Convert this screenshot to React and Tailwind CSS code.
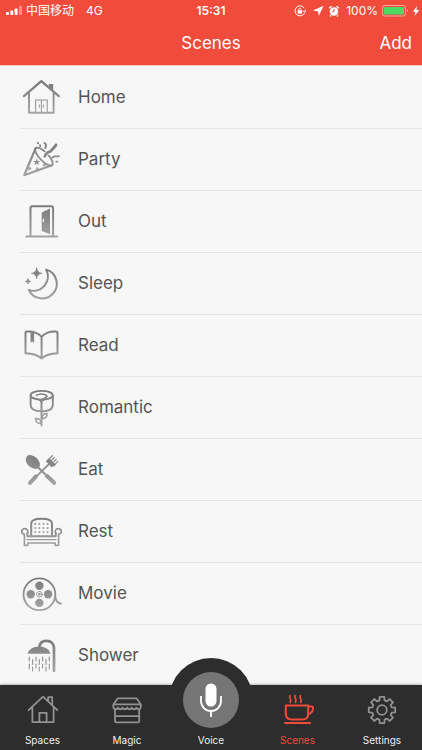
import { useState } from "react";

const HomeIcon = () => (
  <>
    <path d="M4 19.2 21.3 4.2 38.8 19.2" strokeWidth="2.4" />
    <path d="M9 16v19.7h24.6V16" strokeWidth="1.9" />
    <path d="M28.8 7h4.4v7l-4.4-3.800z" fill="url(#ink)" stroke="none" />
    <path d="M15.6 35V23h11.6v12M21.4 23v12" strokeWidth="1.1" />
    <path d="M19.4 28v2.4M23.4 28v2.4" strokeWidth="1" />
  </>
);

const PartyIcon = () => (
  <>
    <path d="M15.6 9.400 4.200 36.200 32 26.200" strokeWidth="2.200" />
    <path d="M15.600 9.200c2-1.800 7 .8 11.400 5.400 4.600 4.800 7 10 5.200 11.600-2 1.600-7-1.200-11.200-5.600-4.400-4.600-7.200-9.800-5.400-11.400z" strokeWidth="1.8" />
    <path d="M23.400 18.400C26 11.600 29.600 14.600 31.600 11.400S35 8.600 36 5.400" stroke="#f7f7f7" strokeWidth="4.400" />
    <path d="M24.800 17.400C26.600 11.800 29.600 14.200 31.600 11.200S35 8.600 36 5.800" strokeWidth="2.700" />
    <path d="M24.400 4.200c2.400 1 1.800 2.800.8 4.800" strokeWidth="1.8" />
    <path d="M17.600 3.800l.6.500M20 6l.3 1.200" strokeWidth="1.700" />
    <path d="M32.400 18.600c2-2.400 4-.2 6.600-1.600M36.200 22.600h1.200" strokeWidth="1.700" />
    <path
      d="M16.700 19.400l1 2.500 2.700.1-2.100 1.700.7 2.600-2.300-1.500-2.300 1.500.7-2.600-2.100-1.700 2.700-.1z"
      fill="url(#ink)"
      stroke="none"
    />
    <path d="M8.400 28l3 1.200-2.400 2zM17 28.400l2 1.800-2.800.6zM24 24.200l2.400 1.800-2.800 1z" fill="url(#ink)" strokeWidth=".5" />
  </>
);

const OutIcon = () => (
  <>
    <path d="M10.500 35V7.200c0-1.200.8-2 2-2h18.600c1.200 0 2 .8 2 2V35" strokeWidth="2" />
    <path d="M6.400 35.400h30.800" strokeWidth="2" />
    <path d="M21.700 11.400 30 7.600v25.600l-8.300-3.200z" fill="url(#ink)" stroke="none" />
    <path d="M23.400 18v2.600" stroke="#f7f7f7" strokeWidth="1.2" />
  </>
);

const SleepIcon = () => (
  <>
    <path d="M26.200 6.600A14.700 14.700 0 1 1 8.800 27 14.400 14.400 0 0 0 26.200 6.600z" strokeWidth="2" />
    <path
      d="M16.700 4.800q.5 5 5.500 5.500-5 .5-5.500 5.500-.5-5-5.500-5.500 5-.5 5.500-5.500zM8 15.600q.3 2.500 2.700 2.800-2.400.3-2.700 2.800-.3-2.500-2.700-2.800 2.400-.3 2.700-2.800z"
      fill="url(#ink)"
      strokeWidth=".5"
    />
  </>
);

const ReadIcon = () => (
  <>
    <path
      d="M21.600 12C19 8 12.400 6.200 7 6.600c-1 0-1.500.6-1.500 1.400v20.200c5.500.2 12 1.400 16.100 5.200 4.100-3.800 10.400-5 15.900-5.200V8c0-.8-.5-1.400-1.500-1.400-5.400-.4-11.800 1.400-14.400 5.400zv21.200"
      strokeWidth="2"
    />
    <path d="M10.500 7.400h3.600v10.400l-1.800-1.200-1.800 1.200z" fill="url(#ink)" stroke="none" />
  </>
);

const RoseIcon = () => (
  <>
    <path d="M10.600 8.600v9.200c0 4 3.600 6.600 11 6.600s11.200-2.600 11.200-6.600V8.600" strokeWidth="1.900" />
    <ellipse cx="21.7" cy="8.2" rx="11.1" ry="4.4" strokeWidth="1.800" />
    <path d="M11 10.500c3.200 1.600 8.200.4 10.500 4.500 1-3.400 7.500-2.600 11-5M16.500 8.400c2.500-2.200 9-1.600 10.500.6 0 2-3.500 2.600-5.500 3.400" strokeWidth="1.5" />
    <path d="M21.5 14.500v24" strokeWidth="2" />
    <path d="M22 31.600c0-3.600 1.600-5.200 5-5.200.2 3.600-1.600 5.200-5 5.200zM21 36.600c-3.400 0-5.400-1.600-5.400-5 3.800-.2 5.400 1.600 5.400 5z" strokeWidth="1.5" />
  </>
);

const EatIcon = () => (
  <>
    <ellipse cx="12.8" cy="13" rx="8.2" ry="5.6" transform="rotate(43 12.8 13)" fill="url(#ink)" stroke="none" />
    <path d="M16 16.500 26 26" strokeWidth="2" />
    <path d="M27 27l7.200 6.800" strokeWidth="4" />
    <path d="M17 26.800 28.400 15.600" strokeWidth="1.8" />
    <path d="M16 27.400l-6 6.400" strokeWidth="4" />
    <path d="M26 12.600 31.200 18c2 .2 3.400-.8 4.600-2.200l-6.600-6.600c-1.600 1-2.800 1.800-3.200 3.400z" fill="url(#ink)" stroke="none" />
    <path d="M28.600 10.600l3.800-4M30.600 12.400l3.800-4M32.600 14.200l3.600-3.800M34.600 15.800l3.200-3.400" strokeWidth="1.1" />
  </>
);

const RestIcon = () => (
  <>
    <path d="M11.200 24V12.400c0-3 4.400-4.600 10.400-4.600s10.400 1.600 10.400 4.600V24" strokeWidth="2" />
    <path
      d="M7.200 23c.6-1.200.9-2.400.2-3.800-1.400-2.600-5.800-1.600-5.800 1.200 0 1.600 1.200 2.600 2.800 2.800v11.200h3.400V32h27.400v2.400h3.400V23.200c1.600-.2 2.800-1.200 2.800-2.800 0-2.800-4.400-3.800-5.800-1.200-.7 1.400-.4 2.600.2 3.800"
      strokeWidth="1.6"
    />
    <path d="M7.400 22v3.200h28.400V22" strokeWidth="1.900" />
    <path d="M7 28.600h29" strokeWidth="1.400" />
    <path
      d="M15.200 13h.1M19.300 13h.1M23.400 13h.1M27.500 13h.1M15.200 17h.1M19.300 17h.1M23.400 17h.1M27.500 17h.1M15.200 21h.1M19.300 21h.1M23.400 21h.1M27.500 21h.1"
      strokeWidth="1.6"
      strokeLinecap="square"
    />
  </>
);

const MovieIcon = () => (
  <>
    <circle cx="19.4" cy="21.3" r="15.9" strokeWidth="1.8" />
    <g fill="url(#ink)" stroke="none">
      <circle cx="19.4" cy="12.7" r="4.2" />
      <circle cx="10.7" cy="21.3" r="4.2" />
      <circle cx="28.1" cy="21.3" r="4.2" />
      <circle cx="19.4" cy="29.9" r="4.2" />
      <circle cx="19.4" cy="21.3" r="1.2" />
    </g>
    <circle cx="19.4" cy="21.3" r="2.8" strokeWidth=".9" />
    <path d="M35.200 23c.2 4 2 6.800 5.600 7.800" strokeWidth="2" />
  </>
);

const ShowerIcon = () => (
  <>
    <path d="M7.600 18.800c1-4.600 5.600-7.400 11.500-7.400s10.400 2.800 11.300 7.400z" fill="url(#ink)" stroke="none" />
    <path d="M19.400 12c.4-4 3-6.200 7-6.200 4.800 0 7.600 3 7.600 7.400V36" strokeWidth="2.7" />
    <path
      d="M9.300 22v4M9.300 29v5M12.600 24.500v5M12.600 32v4M16 22v4M16 29v4M19.300 24.500v5M19.300 32v4M22.600 22v4M22.600 29v4M26 24.500v5M26 32v4M29.300 22v4M29.300 29v5"
      strokeWidth="1.2"
    />
  </>
);

const scenes = [
  { name: "Home", Icon: HomeIcon },
  { name: "Party", Icon: PartyIcon },
  { name: "Out", Icon: OutIcon },
  { name: "Sleep", Icon: SleepIcon },
  { name: "Read", Icon: ReadIcon },
  { name: "Romantic", Icon: RoseIcon },
  { name: "Eat", Icon: EatIcon },
  { name: "Rest", Icon: RestIcon },
  { name: "Movie", Icon: MovieIcon },
  { name: "Shower", Icon: ShowerIcon },
];

// Outline of an eight-tooth gear around 16,16
const gearPath = () => {
  const points = [];
  for (let i = 0; i < 8; i++) {
    [[-15, 10], [-10, 13.4], [10, 13.4], [15, 10]].forEach(([offset, r]) => {
      const a = ((i * 45 + offset) * Math.PI) / 180;
      points.push(`${(16 + r * Math.sin(a)).toFixed(2)} ${(16 - r * Math.cos(a)).toFixed(2)}`);
    });
  }
  return `M${points.join("L")}z`;
};

const tabIcons = {
  Spaces: (
    <path d="M1.600 16.200 16 2.600l14.400 13.600M5.400 13v15.200h21.200V13M21.200 7V3.200h4v7.400M12.400 28V18.800h7.200V28" />
  ),
  Magic: (
    <path d="M6.600 4.400h19.200l4 6H2.400zM2.400 10.400v3.200c.6 2.200 3.600 2.200 4.600 0 1 2.200 3.600 2.200 4.600 0 1 2.200 3.600 2.200 4.600 0 1 2.200 3.600 2.200 4.600 0 1 2.200 3.600 2.200 4.600 0 1 2.200 3.800 2.200 4.400 0v-3.200M4 15.400v11.400c0 1 .6 1.600 1.600 1.600h21c1 0 1.600-.6 1.600-1.600V15.400M4 22.200h24.200" />
  ),
  Scenes: (
    <>
      <path d="M3.800 11.600h22.400v8c0 4-2 6-6 6H9.800c-4 0-6-2-6-6zM26.200 12.600h3.200c1.600 0 2 1 1.600 2.600-.6 2.600-2.200 4.400-5 5" strokeWidth="2" />
      <path d="M3 29h25" strokeWidth="2" />
      <path d="M8 1.600c-1.800 2.400 1.800 3.200.6 5.200-.2.600-.4 1-.2 1.600M13.200 1.600c-1.800 2.400 1.800 3.200.6 5.200-.2.600-.4 1-.2 1.600M18.400 1.600c-1.800 2.400 1.800 3.200.6 5.200-.2.600-.4 1-.2 1.600" />
    </>
  ),
  Settings: (
    <>
      <path d={gearPath()} />
      <circle cx="16" cy="16" r="4.8" />
    </>
  ),
};

const StatusBar = () => (
  <div className="grid h-5 grid-cols-[1fr_auto_1fr] items-center pt-0.5 text-xs">
    <div className="flex items-center gap-1 pl-1.5">
      <svg className="h-2.5 w-4" viewBox="0 0 16 10" fill="currentColor">
        <rect x="0" y="6" width="3" height="3" rx=".8" />
        <rect x="4.3" y="4.5" width="3" height="4.5" rx=".8" />
        <rect x="8.6" y="2.5" width="3" height="6.5" rx=".8" />
        <rect x="13" y="0" width="3" height="9" rx=".8" opacity=".4" />
      </svg>
      <span>中国移动</span>
      <span className="pl-2">4G</span>
    </div>
    <span className="font-semibold">15:31</span>
    <div className="flex items-center justify-end gap-1 pr-0.5">
      <svg className="mr-0.5 size-3" viewBox="0 0 12 12" fill="none" stroke="currentColor">
        <path d="M10.200 3A5 5 0 1 0 10.600 8M11.600 4.600 11 7.200 8.800 6" />
        <rect x="3.6" y="5.2" width="4.4" height="3.4" fill="currentColor" stroke="none" />
        <path d="M4.600 5.200V4.400a1.200 1.200 0 0 1 2.400 0v.8" strokeWidth=".8" />
      </svg>
      <svg className="size-3" viewBox="0 0 12 12" fill="currentColor">
        <path d="M11.500.8 6.800 11 6 6.600 1 5.600z" />
      </svg>
      <svg className="mr-0.5 size-3" viewBox="0 0 12 12">
        <circle cx="6" cy="6.5" r="4.3" fill="currentColor" />
        <path d="M1.200 3.200 3.400 1.200M10.800 3.200 8.600 1.200M3 10.400l-1 1M9 10.400l1 1" stroke="currentColor" strokeWidth="1.5" />
        <path d="M6 3.800v2.900H4.200" fill="none" stroke="#f04b3b" strokeWidth=".9" />
      </svg>
      <span>100%</span>
      <svg className="h-3 w-[26px]" viewBox="0 0 26 12">
        <rect x=".5" y=".5" width="23" height="10.5" rx="2.2" fill="none" stroke="#fff" strokeOpacity=".5" />
        <rect x="2" y="2" width="20" height="7.5" rx="1" fill="#4cd964" />
        <path d="M24.800 4v3.600c1.300-.8 1.300-2.800 0-3.600z" fill="#fff" opacity=".6" />
      </svg>
      <svg className="h-2.5 w-2" viewBox="0 0 8 10" fill="currentColor">
        <path d="M5 0 .8 5.800h2.600L2.600 10l4.800-6H4.600z" />
      </svg>
    </div>
  </div>
);

const TabBar = ({ active, onChange }) => (
  <nav className="relative grid h-[65px] shrink-0 grid-cols-[85fr_84fr_84fr_89fr_80fr] bg-[#2d2d2d] text-[10px] leading-3 text-[#efefef] shadow-[0_-1px_2px_rgba(0,0,0,0.25)]">
    {["Spaces", "Magic", "Voice", "Scenes", "Settings"].map((name) => (
      <button
        key={name}
        type="button"
        onClick={() => onChange(name)}
        className={`relative flex flex-col items-center justify-end gap-2 pb-1 ${
          active === name ? "text-[#ef4b3b]" : ""
        }`}
      >
        {name === "Voice" ? (
          <span className="absolute bottom-2 left-1/2 flex size-[84px] -translate-x-1/2 items-center justify-center rounded-full bg-[#2d2d2d]">
            <span className="flex size-14 items-center justify-center rounded-full bg-[#757575]">
              <svg className="h-9 w-6" viewBox="0 0 24 36" fill="none" stroke="#fff" strokeWidth="1.8">
                <rect x="6.5" y="1.5" width="11" height="23" rx="5.5" fill="#fff" stroke="none" />
                <path d="M2 14v5a10 10 0 0 0 20 0v-5M12 29v6" />
              </svg>
            </span>
          </span>
        ) : (
          <svg
            className={`size-8 ${active === name ? "" : "text-[#929292]"}`}
            viewBox="0 0 32 32"
            fill="none"
            stroke="currentColor"
            strokeWidth="1.8"
            strokeLinecap="round"
            strokeLinejoin="round"
          >
            {tabIcons[name]}
          </svg>
        )}
        <span className="relative">{name}</span>
      </button>
    ))}
  </nav>
);

const App = () => {
  const [tab, setTab] = useState("Scenes");

  return (
    <div className="flex h-screen flex-col bg-[#f7f7f7] font-['Inter','Noto_Sans_CJK_SC',sans-serif]">
      {/* Gradient shared by all the scene icons */}
      <svg className="absolute size-0" aria-hidden="true">
        <defs>
          <linearGradient id="ink" gradientUnits="userSpaceOnUse" x1="0" y1="4" x2="0" y2="38">
            <stop offset="0" stopColor="#7a7a7a" />
            <stop offset="1" stopColor="#a6a6a6" />
          </linearGradient>
        </defs>
      </svg>

      <header className="shrink-0 border-b border-[#f9c9c4] bg-[#f04b3b] text-white">
        <StatusBar />
        <div className="grid h-[45px] grid-cols-[1fr_auto_1fr] items-center px-2.5 pt-0.5 text-[17px]">
          <h1 className="col-start-2">Scenes</h1>
          <button type="button" className="justify-self-end">
            Add
          </button>
        </div>
      </header>

      <main className="min-h-0 flex-1 overflow-y-auto pt-px [scrollbar-width:none]">
        <ul className="divide-y divide-[#e4e4e6] pl-5">
          {scenes.map(({ name, Icon }) => (
            <li key={name}>
              <button type="button" className="flex h-[61px] w-full items-center gap-4 text-left text-[17px] text-[#545454]">
                <svg
                  className="size-[42px] shrink-0"
                  viewBox="0 0 42 42"
                  fill="none"
                  stroke="url(#ink)"
                  strokeLinecap="round"
                  strokeLinejoin="round"
                >
                  <Icon />
                </svg>
                {name}
              </button>
            </li>
          ))}
        </ul>
      </main>

      <TabBar active={tab} onChange={setTab} />
    </div>
  );
};

export default App;
